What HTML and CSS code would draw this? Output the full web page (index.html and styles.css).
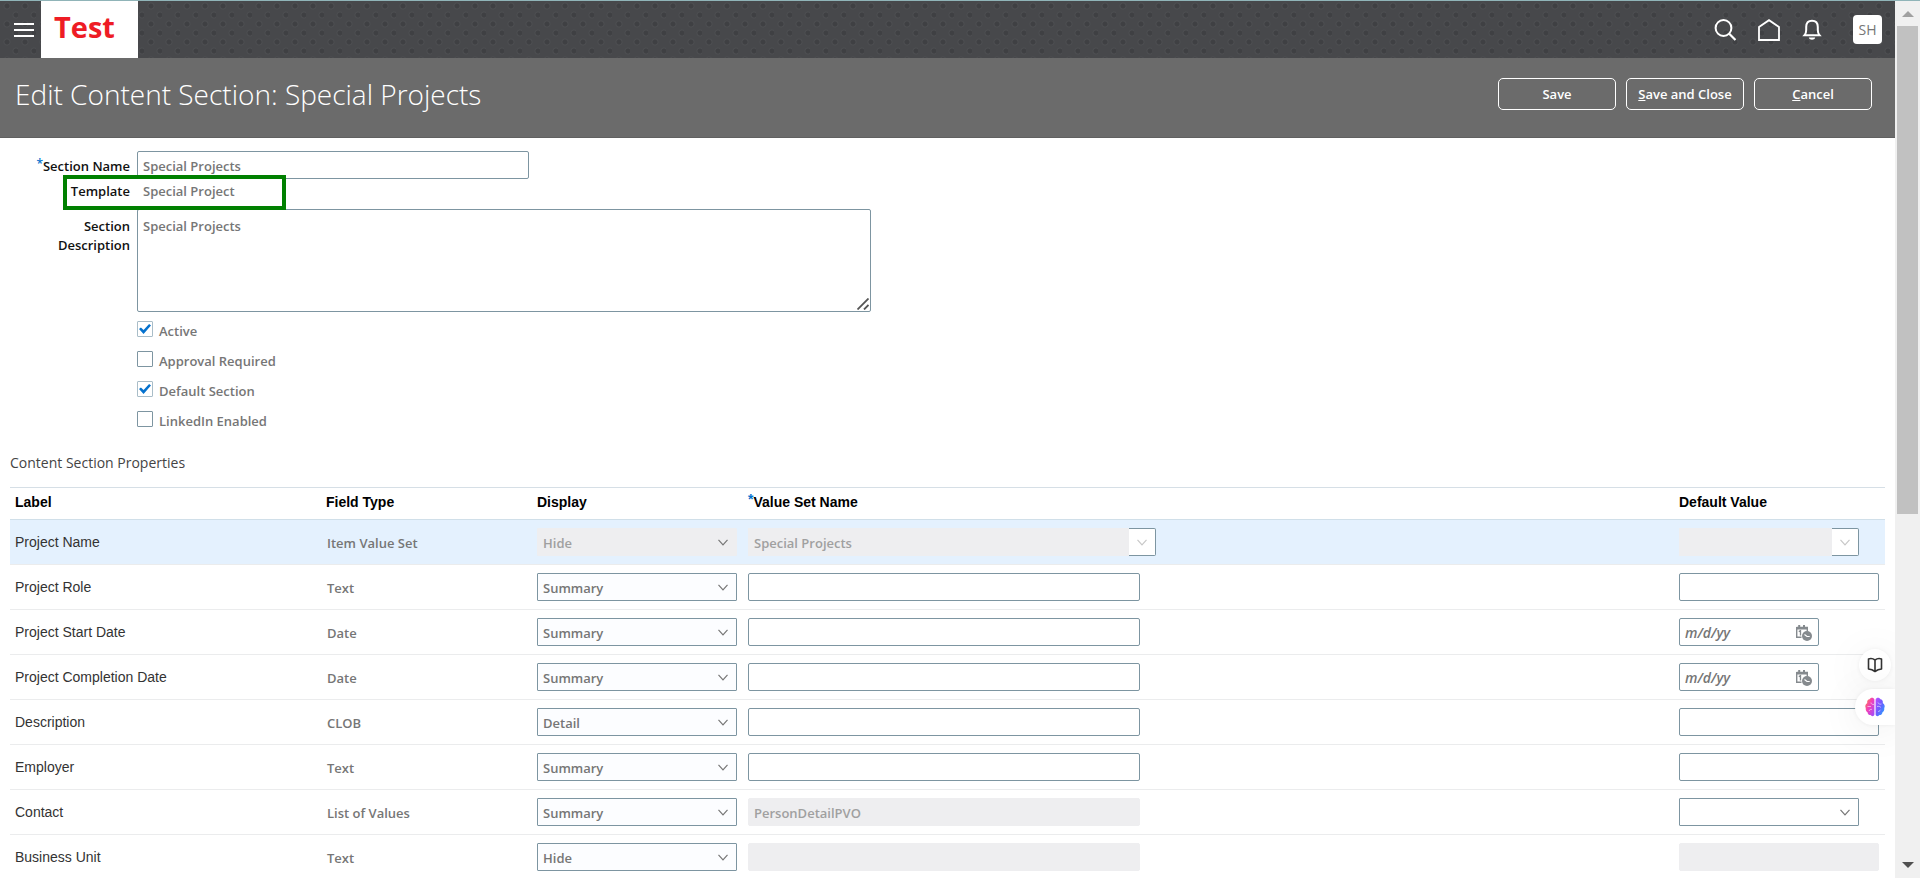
FILE: index.html
```html
<!DOCTYPE html>
<html lang="en">
<head>
<meta charset="utf-8">
<title>Edit Content Section: Special Projects</title>
<link rel="stylesheet" href="styles.css">
</head>
<body>
<svg class="sprite" aria-hidden="true">
  <symbol id="chevron" viewBox="0 0 10 7"><path d="M.5 .8L5 5.800 9.500.8" fill="none" stroke="currentColor" stroke-width="1.200"/></symbol>
  <symbol id="calendar" viewBox="0 0 16 16">
    <path d="M.7 2.500h10.600v4M.7 2v10.300h4.800" fill="none" stroke="#858a8e" stroke-width="1.400"/>
    <path d="M0 2h11v2.400H0zM2.200 0h2v3h-2zM7 0h2v3H7z" fill="#858a8e"/>
    <path d="M2.800 6.600l1.700-1v5" fill="none" stroke="#858a8e" stroke-width="1.300"/>
    <circle cx="11" cy="11" r="5" fill="#858a8e"/>
    <path d="M8.500 9.500l2.500 2h2.700" fill="none" stroke="#fff" stroke-width="1.200"/>
  </symbol>
</svg>
<div class="app">
  <div class="page">
    <header class="topbar">
      <button class="icon-btn menu" aria-label="Menu"><svg width="20" height="14" viewBox="0 0 20 14"><path d="M0 1h20M0 7h20M0 13h20" stroke="#fff" stroke-width="2"/></svg></button>
      <a class="logo" href="#">Test</a>
      <nav class="tools">
        <button class="icon-btn" aria-label="Search"><svg width="22" height="22" viewBox="0 0 22 22"><circle cx="9.500" cy="9" r="7.900" fill="none" stroke="#fff" stroke-width="2"/><path d="M15 14.500l6.500 6.500" stroke="#fff" stroke-width="2.200"/></svg></button>
        <button class="icon-btn" aria-label="Home"><svg width="22" height="22" viewBox="0 0 22 22"><path d="M1 8L11 1.200 21 8v13H1z" fill="none" stroke="#fff" stroke-width="1.800"/></svg></button>
        <button class="icon-btn" aria-label="Notifications"><svg width="20" height="22" viewBox="0 0 20 22"><path d="M2.500 16.200C4 14.500 4.200 13.500 4.200 11V8c0-4 2-6.200 5.800-6.200S15.800 4 15.800 8v3c0 2.500.2 3.500 1.700 5.200z" fill="none" stroke="#fff" stroke-width="2"/><path d="M6.800 18.500c.5 3 5.900 3 6.400 0z" fill="#fff"/></svg></button>
        <button class="avatar">SH</button>
      </nav>
    </header>
    <div class="titlebar">
      <h1>Edit Content Section: Special Projects</h1>
      <div class="actions">
        <button class="btn">Save</button>
        <button class="btn"><span><u>S</u>ave and Close</span></button>
        <button class="btn"><span><u>C</u>ancel</span></button>
      </div>
    </div>
    <main>
      <form class="form">
        <label class="lab name-lab" for="name"><span class="req">*</span>Section Name</label>
        <input class="field wide" id="name" value="Special Projects">
        <span class="lab tpl">Template</span>
        <span class="val tpl">Special Project</span>
        <label class="lab desc-lab" for="desc">Section Description</label>
        <div class="area">
          <textarea class="field" id="desc">Special Projects</textarea>
          <svg class="grip" width="12" height="12" viewBox="0 0 12 12"><path d="M.5 11.500l11-11M7 11.500L11.500 7" stroke="#555" stroke-width="1.800"/></svg>
        </div>
        <div class="checks">
          <label><input type="checkbox" checked><span>Active</span></label>
          <label><input type="checkbox"><span>Approval Required</span></label>
          <label><input type="checkbox" checked><span>Default Section</span></label>
          <label><input type="checkbox"><span>LinkedIn Enabled</span></label>
        </div>
        <div class="highlight"></div>
      </form>
      <h2>Content Section Properties</h2>
      <table>
        <colgroup><col class="c1"><col class="c2"><col class="c3"><col><col class="c5"></colgroup>
        <thead><tr><th>Label</th><th>Field Type</th><th>Display</th><th><span class="req">*</span>Value Set Name</th><th>Default Value</th></tr></thead>
        <tbody>
          <tr class="selected"><td>Project Name</td><td class="type">Item Value Set</td>
            <td><div class="select"><select aria-label="Display" disabled><option>Hide</option></select><svg><use href="#chevron"/></svg></div></td>
            <td><div class="combo set"><input class="field" aria-label="Value set" value="Special Projects" disabled><button class="drop" disabled aria-label="Open list"><svg><use href="#chevron"/></svg></button></div></td>
            <td><div class="combo def"><input class="field" aria-label="Default value" disabled><button class="drop" disabled aria-label="Open list"><svg><use href="#chevron"/></svg></button></div></td></tr>
          <tr><td>Project Role</td><td class="type">Text</td>
            <td><div class="select"><select aria-label="Display"><option>Summary</option></select><svg><use href="#chevron"/></svg></div></td>
            <td><input class="field wide" aria-label="Value set"></td>
            <td><input class="field short" aria-label="Default value"></td></tr>
          <tr><td>Project Start Date</td><td class="type">Date</td>
            <td><div class="select"><select aria-label="Display"><option>Summary</option></select><svg><use href="#chevron"/></svg></div></td>
            <td><input class="field wide" aria-label="Value set"></td>
            <td><div class="date"><input class="field" aria-label="Default value" placeholder="m/d/yy"><button aria-label="Select date"><svg><use href="#calendar"/></svg></button></div></td></tr>
          <tr><td>Project Completion Date</td><td class="type">Date</td>
            <td><div class="select"><select aria-label="Display"><option>Summary</option></select><svg><use href="#chevron"/></svg></div></td>
            <td><input class="field wide" aria-label="Value set"></td>
            <td><div class="date"><input class="field" aria-label="Default value" placeholder="m/d/yy"><button aria-label="Select date"><svg><use href="#calendar"/></svg></button></div></td></tr>
          <tr><td>Description</td><td class="type">CLOB</td>
            <td><div class="select"><select aria-label="Display"><option>Detail</option></select><svg><use href="#chevron"/></svg></div></td>
            <td><input class="field wide" aria-label="Value set"></td>
            <td><input class="field short" aria-label="Default value"></td></tr>
          <tr><td>Employer</td><td class="type">Text</td>
            <td><div class="select"><select aria-label="Display"><option>Summary</option></select><svg><use href="#chevron"/></svg></div></td>
            <td><input class="field wide" aria-label="Value set"></td>
            <td><input class="field short" aria-label="Default value"></td></tr>
          <tr><td>Contact</td><td class="type">List of Values</td>
            <td><div class="select"><select aria-label="Display"><option>Summary</option></select><svg><use href="#chevron"/></svg></div></td>
            <td><input class="field wide" aria-label="Value set" value="PersonDetailPVO" disabled></td>
            <td><div class="select plain"><select aria-label="Default value"><option></option></select><svg><use href="#chevron"/></svg></div></td></tr>
          <tr><td>Business Unit</td><td class="type">Text</td>
            <td><div class="select"><select aria-label="Display"><option>Hide</option></select><svg><use href="#chevron"/></svg></div></td>
            <td><input class="field wide" aria-label="Value set" disabled></td>
            <td><input class="field short" aria-label="Default value" disabled></td></tr>
        </tbody>
      </table>
    </main>
    <div class="floaters">
      <button class="book" aria-label="Reader"><svg width="16" height="16" viewBox="0 0 16 16"><path d="M8 3C6 1.500 3.500 1.300 1.500 2v10c2.500.2 4.500 1 6.500 2.500 2-1.500 4-2.300 6.500-2.500V2C12.500 1.300 10 1.500 8 3zM8 3v11" fill="none" stroke="#333" stroke-width="1.600" stroke-linejoin="round"/></svg></button>
      <button class="brain" aria-label="Assistant"><svg width="20" height="20" viewBox="0 0 20 20">
        <defs>
          <linearGradient id="bl" x1="0" y1="0" x2="1" y2="1"><stop offset="0" stop-color="#ff8a3c"/><stop offset=".45" stop-color="#f23fb8"/><stop offset="1" stop-color="#9b4dff"/></linearGradient>
          <linearGradient id="br" x1="0" y1="0" x2="1" y2="1"><stop offset="0" stop-color="#c04dff"/><stop offset=".5" stop-color="#6a5cff"/><stop offset="1" stop-color="#18b4ff"/></linearGradient>
        </defs>
        <path d="M9.400 2.500C8.800.3 5.500.2 4.600 2.300 2.500 2.600 1.800 4.500 2.300 6 .3 7.200-.2 9.500.8 11c-.4 2 .5 3.500 1.700 4.200.2 2 1.700 3 3 2.900 1.200 1.600 3.500 1.300 3.900-.6z" fill="url(#bl)"/>
        <path d="M10.600 2.500c.6-2.200 3.900-2.300 4.800-.2 2.100.3 2.800 2.200 2.300 3.700 2 1.200 2.500 3.500 1.500 5 .4 2-.5 3.500-1.700 4.200-.2 2-1.700 3-3 2.900-1.200 1.600-3.500 1.300-3.900-.6z" fill="url(#br)"/>
        <path d="M2.500 9.500h3.500M6 5.500c0 1.500 1 2 3 2M4 14c.5-1.500 2-2 3-1.500M13 5.500c.5 1.500 2 2 3.500 1.500M12 9.500c1.500-.5 3 0 4 1M13 14.500c1 0 2-.7 2.500-1.700" fill="none" stroke="#fff" stroke-opacity=".6" stroke-width=".9"/>
      </svg></button>
    </div>
  </div>
  <div class="scrollbar" aria-hidden="true">
    <svg width="12" height="6" viewBox="0 0 12 6"><path d="M0 6l6-6 6 6z" fill="#a0a0a0"/></svg>
    <div class="thumb"></div>
    <svg width="12" height="6" viewBox="0 0 12 6"><path d="M0 0l6 6 6-6z" fill="#505050"/></svg>
  </div>
</div>
</body>
</html>
```
FILE: styles.css
```css
* { box-sizing: border-box; }
body { margin: 0; font: 600 13px/20px "Open Sans", sans-serif; color: #767676; background: #fff; }
button, input, select, textarea { font: inherit; color: inherit; margin: 0; }
button { border: 0; padding: 0; background: none; }
.sprite { position: absolute; width: 0; height: 0; }

.app { display: flex; height: 100vh; border-top: 1px solid #90b4b8; overflow: hidden; }
.page { position: relative; flex: 1; min-width: 0; overflow: hidden; }

.topbar {
  display: flex; align-items: stretch; height: 57px; background-color: #47484b;
  background-image:
    radial-gradient(circle at 7px 5px, #3f4043 2px, #4d4e51 3px, transparent 4px),
    radial-gradient(circle at 16px 14px, #3f4043 2px, #4d4e51 3px, transparent 4px);
  background-size: 18px 18px;
}
.icon-btn { display: grid; place-items: center; }
.menu { width: 41px; padding: 1px 0 0 7px; }
.logo { width: 97px; padding: 8px 0 0 13px; background: #fff; color: #ee1c25; font-size: 29px; font-weight: 700; line-height: 36px; text-decoration: none; }
.tools { display: flex; align-items: center; gap: 22px; margin-left: auto; padding-right: 13px; }
.avatar { width: 29px; height: 29px; margin-left: 9px; border-radius: 4px; background: #fff; color: #767676; font-size: 14px; font-weight: 400; }

.titlebar { display: flex; justify-content: space-between; align-items: flex-start; height: 80px; padding: 16px 23px 0 15px; background: #6b6b6b; border-bottom: 1px solid #606060; color: #fff; }
h1 { margin: 0; font-size: 28px; font-weight: 300; line-height: 40px; }
.actions { display: flex; gap: 10px; padding-top: 4px; }
.btn { width: 118px; height: 32px; border: 1px solid #fff; border-radius: 5px; }

main { padding: 13px 10px 0; }
.form { position: relative; display: grid; grid-template-columns: 120px 1fr; column-gap: 7px; }
.lab { color: #111; text-align: right; line-height: 19px; }
.name-lab { padding-top: 6px; }
.req { color: #0572ce; font-size: 12px; vertical-align: 3px; line-height: 10px; }
.tpl { height: 30px; padding-top: 3px; }
.val { padding-left: 6px; line-height: 19px; }
.desc-lab { padding: 8px 0 0 30px; }
.field { display: block; height: 28px; padding: 1px 5px 0; border: 1px solid #7d95a1; border-radius: 2px; background: #fff; }
.field:disabled, .select select:disabled { background: #eeeef0; border-color: #eeeef0; color: #a0a0a0; opacity: 1; }
.wide { width: 392px; }
.short { width: 200px; }
.area { position: relative; width: 734px; }
.area .field { width: 100%; height: 103px; padding-top: 6px; resize: none; }
.grip { position: absolute; right: 2px; bottom: 2px; }
.checks { grid-column: 2; display: grid; gap: 10px; padding-top: 8px; }
.checks label { display: flex; align-items: flex-start; gap: 6px; height: 20px; }
.checks input { appearance: none; display: grid; place-items: center; width: 16px; height: 16px; margin-top: 1px; border: 1px solid #7d95a1; border-radius: 1px; }
.checks input:checked { border-color: #a9bdc8; }
.checks input:checked::after { content: ""; width: 12px; height: 10px; background: #0572ce; clip-path: polygon(0 50%, 16% 36%, 38% 60%, 84% 0, 100% 16%, 38% 100%); }
.checks span { padding-top: 1px; }
.highlight { position: absolute; left: 53px; top: 24px; width: 223px; height: 35px; border: 4px solid #008000; }

h2 { margin: 23px 0 14px; color: #444; font-size: 14px; font-weight: 400; line-height: 20px; }
table { width: 100%; table-layout: fixed; border-spacing: 0; border-top: 1px solid #d6dfe6; }
.c1 { width: 311px; }
.c2, .c3, .c5 { width: 211px; }
th, td { height: 45px; padding: 0 5px; border-bottom: 1px solid #ebeced; text-align: left; font: 400 14px/20px "Liberation Sans", Arial, sans-serif; color: #333; }
th { height: 32px; padding-bottom: 3px; font-weight: 700; color: #000; border-bottom-color: #d0dfe9; }
th .req { font-size: 14px; }
td.type { padding: 2px 6px 0; font: inherit; color: #767676; }
td .field, td select { font: 600 13px/20px "Open Sans", sans-serif; color: #767676; }
.selected { background: #e4f1fe; }
.select { position: relative; width: 200px; }
.select select { appearance: none; display: block; width: 100%; height: 28px; padding: 1px 5px 0; border: 1px solid #7d95a1; border-radius: 1px; background: #fcfdff; }
.select svg { position: absolute; right: 9px; top: 11px; width: 10px; height: 7px; color: #777; }
.select.plain { width: 180px; }
.plain select { background: #fff; }
.combo { display: flex; }
.combo .field { flex: 1; min-width: 0; border-radius: 0; }
.set { width: 408px; }
.def { width: 180px; }
.drop { display: grid; place-items: center; width: 27px; height: 28px; border: 1px solid #7d95a1; border-left: 0; border-radius: 0 2px 2px 0; background: #fff; color: #c8c8c8; }
.drop svg { width: 10px; height: 7px; }
.date { position: relative; width: 140px; }
.date .field { width: 100%; font-size: 14px; }
.date .field::placeholder { color: #767676; font-style: italic; opacity: 1; }
.date button { position: absolute; right: 7px; top: 7px; width: 16px; height: 16px; }
.date svg { display: block; width: 16px; height: 16px; }

.floaters { position: absolute; right: 0; top: 648px; display: flex; flex-direction: column; align-items: flex-end; gap: 8px; }
.floaters button { display: grid; place-items: center; background: #fff; box-shadow: 0 0 4px rgba(0,0,0,.06), 0 4px 40px rgba(0,0,0,.08); }
.floaters .book { width: 32px; height: 32px; margin-right: 4px; border-radius: 50%; }
.floaters .brain { width: 40px; height: 36px; border-radius: 18px 0 0 18px; }

.scrollbar { display: flex; flex-direction: column; align-items: center; width: 25px; padding: 10px 0; background: #f0f0f0; }
.thumb { width: 21px; height: 57%; margin: 9px 0 auto; background: #c1c1c1; }
```
